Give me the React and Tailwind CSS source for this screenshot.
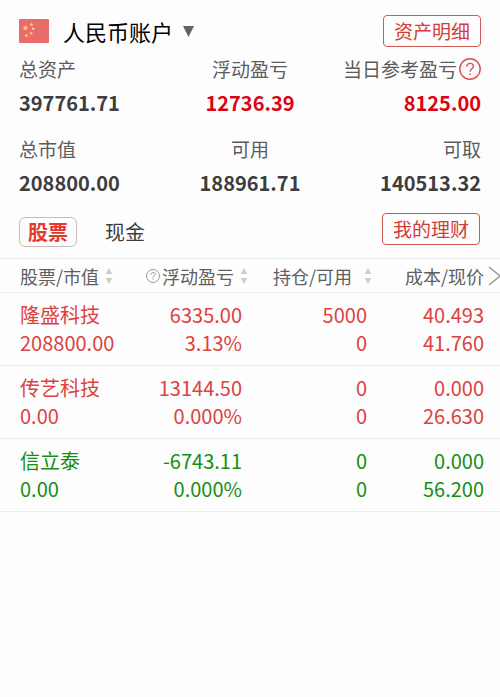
import React from "react";

const summary = [
  { label: "总资产", value: "397761.71", tone: "text-[#3d3d3f]", align: "text-left" },
  { label: "浮动盈亏", value: "12736.39", tone: "text-[#dc0410]", align: "text-center" },
  { label: "当日参考盈亏", value: "8125.00", tone: "text-[#dc0410]", align: "text-right", help: true },
  { label: "总市值", value: "208800.00", tone: "text-[#3d3d3f]", align: "text-left" },
  { label: "可用", value: "188961.71", tone: "text-[#3d3d3f]", align: "text-center" },
  { label: "可取", value: "140513.32", tone: "text-[#3d3d3f]", align: "text-right" },
];

const holdings = [
  { tone: "text-[#dc4240]", cells: [["隆盛科技", "208800.00"], ["6335.00", "3.13%"], ["5000", "0"], ["40.493", "41.760"]] },
  { tone: "text-[#dc4240]", cells: [["传艺科技", "0.00"], ["13144.50", "0.000%"], ["0", "0"], ["0.000", "26.630"]] },
  { tone: "text-[#148f14]", cells: [["信立泰", "0.00"], ["-6743.11", "0.000%"], ["0", "0"], ["0.000", "56.200"]] },
];

const cellPad = ["pl-5 text-left", "pr-2 text-right", "pr-2 text-right", "pr-4 text-right"];

function Star({ x, y, r }) {
  return (
    <path
      transform={`translate(${x} ${y}) scale(${r})`}
      d="M0-1 .3-.38.95-.31.48.16.59.81 0 .5-.59.81-.48.16-.95-.31-.3-.38z"
      fill="#f8d08c"
    />
  );
}

function Flag() {
  return (
    <svg className="h-6 w-[30px] shrink-0" viewBox="0 0 30 24" aria-hidden="true">
      <rect width="30" height="24" rx="1" fill="#e76c6a" />
      <Star x={6.5} y={8.8} r={2.9} />
      <Star x={12.5} y={5.5} r={1.9} />
      <Star x={14.2} y={9.8} r={1.9} />
      <Star x={12.2} y={14.3} r={1.9} />
      <Star x={7.5} y={16.5} r={1.9} />
    </svg>
  );
}

function Help({ className }) {
  return (
    <svg className={className} viewBox="0 0 22 22" fill="none" stroke="currentColor" strokeWidth="1.4" aria-hidden="true">
      <circle cx="11" cy="11" r="10.2" />
      <path d="M7.8 8.7C7.8 6.7 9.1 5.4 11.1 5.4S14.4 6.7 14.4 8.4C14.4 10.6 11.1 10.9 11.1 13.8" />
      <path d="M11.1 15.4v1.5" strokeWidth="1.6" />
    </svg>
  );
}

function SortArrows() {
  return (
    <svg className="h-4 w-2 shrink-0" viewBox="0 0 8 16" fill="#cccccc" aria-hidden="true">
      <path d="M4 0 7.3 6H.7zM4 16 .7 10h6.6z" />
    </svg>
  );
}

function OutlineButton({ children }) {
  return (
    <button className="h-8 rounded border border-[#cf5a55] px-[10px] text-[19px] leading-7 text-[#d43c36]">
      {children}
    </button>
  );
}

export default function App() {
  return (
    <main className="min-h-screen overflow-x-hidden bg-[#fdfdfd] font-['Noto_Sans_CJK_SC',sans-serif]">
      <header className="flex items-center justify-between px-[19px] pt-[15px]">
        <div className="flex items-center">
          <Flag />
          <div className="relative ml-[14px] flex items-center">
            <select aria-label="账户" className="appearance-none bg-transparent pr-6 text-[22px] leading-8 text-black">
              <option>人民币账户</option>
            </select>
            <svg className="pointer-events-none absolute right-1 h-[11px] w-[11px]" viewBox="0 0 11 11" aria-hidden="true">
              <path d="M0 0h11L5.5 11z" fill="#626262" />
            </svg>
          </div>
        </div>
        <OutlineButton>资产明细</OutlineButton>
      </header>

      <dl className="grid grid-cols-3 gap-y-[18px] px-[19px] pt-2">
        {summary.map((item) => (
          <div key={item.label} className={item.align}>
            <dt className="text-[19px] leading-7 whitespace-nowrap text-[#5c5c5c]">
              {item.help ? (
                <span className="flex items-center justify-end gap-[2px]">
                  {item.label}
                  <button aria-label="参考盈亏说明" className="text-[#dc4c50]">
                    <Help className="h-[22px] w-[22px]" />
                  </button>
                </span>
              ) : (
                item.label
              )}
            </dt>
            <dd className={`mt-[6px] text-xl leading-7 font-bold ${item.tone}`}>{item.value}</dd>
          </div>
        ))}
      </dl>

      <div className="flex items-start justify-between pt-4 pr-5 pb-[11px] pl-[19px]">
        <div role="tablist" className="flex items-center pt-1">
          <button role="tab" aria-selected="true" className="h-[30px] rounded-md border border-[#cdb9b6] px-2 text-xl leading-7 font-bold text-[#e23a2e]">
            股票
          </button>
          <button role="tab" aria-selected="false" className="ml-7 text-xl leading-7 text-[#3d3d3d]">
            现金
          </button>
        </div>
        <OutlineButton>我的理财</OutlineButton>
      </div>

      <div className="relative">
        <table className="w-full table-fixed border-collapse">
          <thead>
            <tr className="h-[34px] border-y border-[#ececec] text-lg leading-7 whitespace-nowrap text-[#5f5f5f]">
              <th className="pl-5 font-normal">
                <button className="flex items-center gap-[6px]">股票/市值<SortArrows /></button>
              </th>
              <th className="pr-[2px] font-normal">
                <button className="ml-auto flex items-center gap-[6px]">
                  <span className="flex items-center gap-[2px]">
                    <Help className="h-[14px] w-[14px] text-[#8f8f8f]" />
                    浮动盈亏
                  </span>
                  <SortArrows />
                </button>
              </th>
              <th className="pr-[3px] font-normal">
                <button className="ml-auto flex items-center gap-3">持仓/可用<SortArrows /></button>
              </th>
              <th className="pr-4 text-right font-normal">成本/现价</th>
            </tr>
          </thead>
          <tbody>
            {holdings.map((row) => (
              <tr key={row.cells[0][0]} className={`border-b border-[#ececec] text-xl leading-7 ${row.tone}`}>
                {row.cells.map(([top, bottom], i) => (
                  <td key={i} className={`py-2 ${cellPad[i]}`}>
                    <div>{top}</div>
                    <div>{bottom}</div>
                  </td>
                ))}
              </tr>
            ))}
          </tbody>
        </table>
        <button aria-label="更多列" className="absolute top-2 right-0 text-[#9a9a9a]">
          <svg className="h-5 w-3" viewBox="0 0 12 20" fill="none" stroke="currentColor" strokeWidth="1.5" aria-hidden="true">
            <path d="M1 1 12 10 1 19" />
          </svg>
        </button>
      </div>
    </main>
  );
}
